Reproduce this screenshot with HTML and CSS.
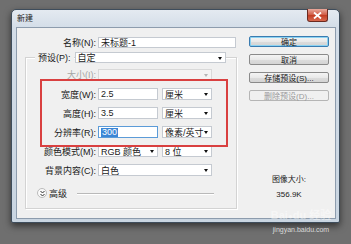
FILE: index.html
```html
<!DOCTYPE html>
<html lang="zh">
<head>
<meta charset="utf-8">
<title>新建</title>
<link rel="stylesheet" href="styles.css">
</head>
<body>
<div class="window">
  <div class="titlebar">
    <span class="title">新建</span>
    <span class="close"><svg width="9" height="7" viewBox="0 0 9 7"><path d="M1 0.5 L8 6.5 M8 0.5 L1 6.5" stroke="#fff" stroke-width="1.8"/></svg></span>
  </div>
  <div class="content">
    <div class="left">
      <div class="row name-row">
        <span class="label wide">名称(N):</span>
        <span class="field text w140">未标题-1</span>
      </div>
      <div class="group">
        <div class="row preset-row">
          <span class="legend">预设(P):</span>
          <span class="field select w151">自定<i class="arrow"></i></span>
        </div>
        <div class="row r-size">
          <span class="label disabled">大小(I):</span>
          <span class="field select w114 off"><i class="arrow grey"></i></span>
        </div>
        <div class="row r-gap8">
          <span class="label">宽度(W):</span>
          <span class="field text w60">2.5</span>
          <span class="field select w50">厘米<i class="arrow"></i></span>
        </div>
        <div class="row">
          <span class="label">高度(H):</span>
          <span class="field text w60">3.5</span>
          <span class="field select w50">厘米<i class="arrow"></i></span>
        </div>
        <div class="row">
          <span class="label">分辨率(R):</span>
          <span class="field text w60 focus"><span class="sel">300</span></span>
          <span class="field select w50">像素/英寸<i class="arrow"></i></span>
        </div>
        <div class="row">
          <span class="label">颜色模式(M):</span>
          <span class="field select w60">RGB 颜色<i class="arrow"></i></span>
          <span class="field select w50">8 位<i class="arrow"></i></span>
        </div>
        <div class="row">
          <span class="label">背景内容(C):</span>
          <span class="field select w114">白色<i class="arrow"></i></span>
        </div>
        <div class="adv">
          <span class="chev"><svg width="7" height="7" viewBox="0 0 7 7"><path d="M1.5 1 L3.5 3 L5.5 1 M1.5 4 L3.5 6 L5.5 4" fill="none" stroke="#333" stroke-width="1"/></svg></span>
          <span class="adv-text">高级</span>
          <span class="adv-line"></span>
        </div>
      </div>
    </div>
    <div class="right">
      <div class="btn default">确定</div>
      <div class="btn">取消</div>
      <div class="btn">存储预设(S)...</div>
      <div class="btn off">删除预设(D)...</div>
      <div class="imgsize">
        <div>图像大小:</div>
        <div class="kb">356.9K</div>
      </div>
    </div>
  </div>
</div>
<div class="redbox"></div>
<div class="watermark">
  <div class="wm-logo">Bai<span class="paw">●</span>du 经验</div>
  <div class="wm-url">jingyan.baidu.com</div>
</div>
</body>
</html>
```

FILE: styles.css
```css
html, body {
  margin: 0;
  padding: 0;
}
body {
  width: 351px;
  height: 244px;
  background: #6f6f6f;
  font-family: "Liberation Sans", "Noto Sans CJK SC", sans-serif;
  font-size: 9px;
  color: #1a1a1a;
  position: relative;
  overflow: hidden;
  padding-top: 9px;
  box-sizing: border-box;
}
.window {
  margin-left: 11px;
  width: 329px;
  height: 214px;
  box-sizing: border-box;
  border: 1px solid #3e4d5c;
  border-radius: 5px 5px 2px 2px;
  background: linear-gradient(#e4eaf1 0px, #d3dde8 18px, #c9d5e1 100%);
  box-shadow: 0 3px 7px rgba(0,0,0,0.55);
  padding: 0 3px 3px 4px;
  display: flex;
  flex-direction: column;
}
.titlebar {
  height: 17px;
  display: flex;
  align-items: center;
  position: relative;
}
.title {
  margin-left: 1px;
  font-size: 8px;
  color: #222;
  line-height: 1;
}
.close {
  position: absolute;
  right: 8px;
  top: -1px;
  width: 21px;
  height: 13px;
  box-sizing: border-box;
  border: 1px solid #6b2a20;
  border-top: none;
  border-radius: 0 0 3px 3px;
  background: linear-gradient(#e9a99c, #d05a43 50%, #c23c22 51%, #d8694f);
  display: flex;
  align-items: center;
  justify-content: center;
}
.content {
  flex: 1;
  background: #f0f0f0;
  border: 1px solid #8d9cad;
  display: flex;
  position: relative;
}
.left {
  width: 223px;
  padding-top: 9px;
}
.row {
  display: flex;
  align-items: center;
  height: 12px;
  margin-top: 7px;
}
.name-row {
  margin-top: 0;
  height: 11px;
}
.label {
  width: 70px;
  text-align: right;
  margin-right: 2px;
  white-space: nowrap;
}
.label.wide {
  width: 80px;
}
.label.disabled {
  color: #a5a5a5;
}
.field {
  height: 100%;
  box-sizing: border-box;
  background: #fff;
  border: 1px solid #c5cad1;
  display: flex;
  align-items: center;
  padding-left: 2px;
  position: relative;
  white-space: nowrap;
  margin-right: 4px;
}
.field.off {
  background: #f4f4f4;
  border-color: #d9d9d9;
}
.field.focus {
  border-color: #5b9bd8;
}
.sel {
  background: #3b86d6;
  color: #fff;
  padding: 0 1px;
  line-height: 9px;
}
.w140 { width: 140px; }
.w151 { width: 151px; }
.w114 { width: 114px; }
.w60 { width: 60px; }
.w50 { width: 50px; }
.arrow {
  position: absolute;
  right: 3px;
  top: 50%;
  margin-top: -1px;
  width: 0;
  height: 0;
  border-left: 2.5px solid transparent;
  border-right: 2.5px solid transparent;
  border-top: 3px solid #111;
}
.arrow.grey {
  border-top-color: #b5b5b5;
}
.group {
  margin-top: 9px;
  margin-left: 8px;
  width: 212px;
  height: 152px;
  box-sizing: border-box;
  border: 1px solid #d3d3d3;
  box-shadow: inset 1px 1px 0 #fff, 1px 1px 0 #fff;
}
.preset-row {
  margin-top: -6px;
  height: 11px;
}
.legend {
  margin-left: 9px;
  padding: 0 3px;
  background: #f0f0f0;
  height: 100%;
  display: flex;
  align-items: center;
  margin-right: 0;
}
.preset-row .field {
  margin-left: 1px;
}
.r-size {
  margin-top: 6px;
  height: 11px;
}
.r-gap8 {
  margin-top: 8px;
}
.adv {
  display: flex;
  align-items: center;
  height: 10px;
  margin-top: 12px;
  margin-left: 11px;
}
.chev {
  width: 8px;
  height: 8px;
  border-radius: 50%;
  border: 1px solid #bbb;
  background: #fafafa;
  display: flex;
  align-items: center;
  justify-content: center;
}
.adv-text {
  margin-left: 2px;
}
.adv-line {
  margin-left: 10px;
  width: 137px;
  height: 1px;
  background: #b9b9b9;
  box-shadow: 0 1px 0 #fff;
}
.right {
  margin-left: 9px;
  width: 80px;
  padding-top: 8px;
  display: flex;
  flex-direction: column;
}
.btn {
  height: 11px;
  box-sizing: border-box;
  border: 1px solid #8a8a8a;
  border-radius: 2px;
  background: linear-gradient(#f4f4f4, #e9e9e9 50%, #dcdcdc 51%, #d4d4d4);
  display: flex;
  align-items: center;
  justify-content: center;
  margin-bottom: 7px;
  font-size: 8px;
  color: #1a1a1a;
}
.btn.default {
  border-color: #3a7bb0;
  box-shadow: inset 0 0 0 1px #8cd3f2;
}
.btn.off {
  color: #9a9a9a;
  border-color: #b5b5b5;
  background: #f0f0f0;
}
.imgsize {
  margin-top: 64px;
  text-align: center;
  line-height: 15px;
  font-size: 8px;
}
.redbox {
  position: absolute;
  left: 40px;
  top: 79px;
  width: 188px;
  height: 68px;
  box-sizing: border-box;
  border: 2px solid #d94040;
}
.watermark {
  position: absolute;
  left: 268px;
  top: 209px;
  width: 66px;
  text-align: center;
  color: rgba(255,255,255,0.75);
}
.wm-logo {
  font-size: 11px;
  font-weight: bold;
  color: rgba(255,255,255,0.45);
  line-height: 13px;
}
.paw {
  font-size: 8px;
}
.wm-url {
  font-size: 7px;
  line-height: 9px;
  margin-top: 2px;
}
```
